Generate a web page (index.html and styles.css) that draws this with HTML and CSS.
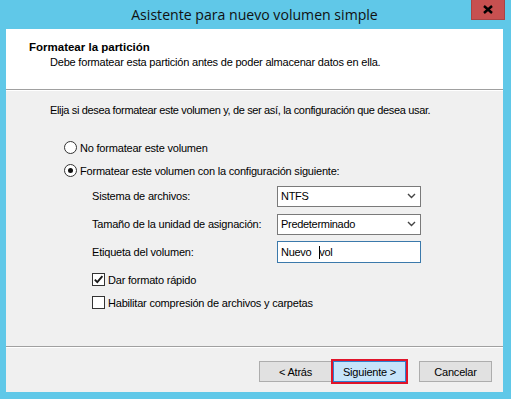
FILE: index.html
```html
<!DOCTYPE html>
<html lang="es">
<head>
<meta charset="utf-8">
<title>Asistente para nuevo volumen simple</title>
<link rel="stylesheet" href="styles.css">
</head>
<body>
<div class="window">
  <div class="titlebar">
    <div class="title">Asistente para nuevo volumen simple</div>
    <div class="close">
      <svg width="10" height="9" viewBox="0 0 10 9"><path d="M1 1 L9 8 M9 1 L1 8" stroke="#000" stroke-width="2.4" fill="none"/></svg>
    </div>
  </div>
  <div class="client">
    <div class="header">
      <div class="h-title">Formatear la partición</div>
      <div class="h-sub">Debe formatear esta partición antes de poder almacenar datos en ella.</div>
    </div>
    <div class="content">
      <div class="intro">Elija si desea formatear este volumen y, de ser así, la configuración que desea usar.</div>
      <div class="radio-row"><span class="radio"></span><span>No formatear este volumen</span></div>
      <div class="radio-row"><span class="radio checked"></span><span>Formatear este volumen con la configuración siguiente:</span></div>
      <div class="form">
        <div class="f-label">Sistema de archivos:</div>
        <div class="field select"><span>NTFS</span><svg width="9" height="6" viewBox="0 0 9 6"><path d="M1 1 L4.5 4.5 L8 1" stroke="#444" stroke-width="1.4" fill="none"/></svg></div>
        <div class="f-label">Tamaño de la unidad de asignación:</div>
        <div class="field select"><span>Predeterminado</span><svg width="9" height="6" viewBox="0 0 9 6"><path d="M1 1 L4.5 4.5 L8 1" stroke="#444" stroke-width="1.4" fill="none"/></svg></div>
        <div class="f-label">Etiqueta del volumen:</div>
        <div class="field input"><span>Nuevo</span><span class="caret"></span><span>vol</span></div>
      </div>
      <div class="check-row"><span class="check"><svg width="11" height="11" viewBox="0 0 11 11"><path d="M1.8 5.6 L4.3 8.2 L9.4 2.2" stroke="#1a1a1a" stroke-width="1.9" fill="none"/></svg></span><span>Dar formato rápido</span></div>
      <div class="check-row"><span class="check"></span><span>Habilitar compresión de archivos y carpetas</span></div>
    </div>
    <div class="footer">
      <div class="btn">&lt; Atrás</div>
      <div class="btn next">Siguiente &gt;</div>
      <div class="btn cancel">Cancelar</div>
    </div>
  </div>
</div>
</body>
</html>
```
FILE: styles.css
```css
html, body {
  margin: 0;
  padding: 0;
}
body {
  width: 511px;
  height: 399px;
  overflow: hidden;
  font-family: "Liberation Sans", Arial, sans-serif;
  font-size: 11px;
  letter-spacing: -0.2px;
  color: #000;
}
.window {
  width: 511px;
  height: 399px;
  box-sizing: border-box;
  background: #60c8e8;
  padding: 0 8px 7px 6px;
  display: flex;
  flex-direction: column;
}
.titlebar {
  height: 29px;
  flex: none;
  display: grid;
  grid-template-columns: 1fr auto 1fr;
}
.title {
  grid-column: 2;
  font-family: "Open Sans", "Noto Sans", sans-serif;
  font-size: 14.1px;
  letter-spacing: 0;
  line-height: 29px;
  color: #111;
  white-space: nowrap;
}
.close {
  grid-column: 3;
  justify-self: end;
  align-self: start;
  margin-right: -2px;
  width: 34px;
  height: 20px;
  box-sizing: border-box;
  background: #c75050;
  border: 1px solid #a84444;
  border-top: none;
  display: flex;
  align-items: center;
  justify-content: center;
}
.client {
  flex: 1;
  background: #f0f0f0;
  display: flex;
  flex-direction: column;
}
.header {
  background: #fff;
  height: 61px;
  box-sizing: border-box;
  padding-top: 11px;
  border-bottom: 1px solid #a0a0a0;
  line-height: 15px;
}
.h-title {
  font-weight: bold;
  font-size: 11.5px;
  letter-spacing: 0;
  padding-left: 23px;
}
.h-sub {
  padding-left: 44px;
}
.content {
  flex: 1;
  border-top: 1px solid #fff;
  padding-top: 12px;
  padding-left: 44px;
}
.intro {
  line-height: 15px;
  margin-bottom: 18px;
  letter-spacing: -0.35px;
}
.radio-row {
  height: 23px;
  display: flex;
  align-items: center;
  padding-left: 14px;
  gap: 3px;
}
.radio {
  width: 13px;
  height: 13px;
  box-sizing: border-box;
  border: 1px solid #333;
  border-radius: 50%;
  background: #fff;
  display: flex;
  align-items: center;
  justify-content: center;
}
.radio.checked::after {
  content: "";
  width: 5px;
  height: 5px;
  border-radius: 50%;
  background: #111;
}
.form {
  display: grid;
  grid-template-columns: 185px 144px;
  grid-auto-rows: 28px;
  align-items: center;
  padding-left: 42px;
  margin-bottom: 2px;
}
.field {
  background: #fff;
  box-sizing: border-box;
  height: 21px;
  border: 1px solid #7a7a7a;
  display: flex;
  align-items: center;
  padding: 0 4px 0 3px;
  letter-spacing: -0.3px;
}
.select {
  justify-content: space-between;
}
.input {
  height: 22px;
  border-color: #3b79ab;
}
.caret {
  width: 1px;
  height: 13px;
  background: #000;
  margin-left: 8px;
  margin-right: -1px;
}
.check-row {
  height: 23px;
  display: flex;
  align-items: center;
  padding-left: 42px;
  gap: 3px;
}
.check {
  width: 13px;
  height: 13px;
  box-sizing: border-box;
  border: 1px solid #333;
  background: #fff;
  display: flex;
  align-items: center;
  justify-content: center;
}
.footer {
  height: 46px;
  flex: none;
  box-sizing: border-box;
  border-top: 1px solid #a0a0a0;
  box-shadow: inset 0 1px 0 #fff;
  padding: 14px 11px 0 0;
  display: flex;
  justify-content: flex-end;
  align-items: flex-start;
}
.btn {
  width: 73px;
  height: 21px;
  box-sizing: border-box;
  background: #e1e1e1;
  border: 1px solid #adadad;
  display: flex;
  align-items: center;
  justify-content: center;
}
.next {
  margin-left: 1px;
  background: #c7e4fa;
  border-color: #2f7fd0;
  outline: 2px solid #e0142a;
}
.cancel {
  margin-left: 13px;
}
```
